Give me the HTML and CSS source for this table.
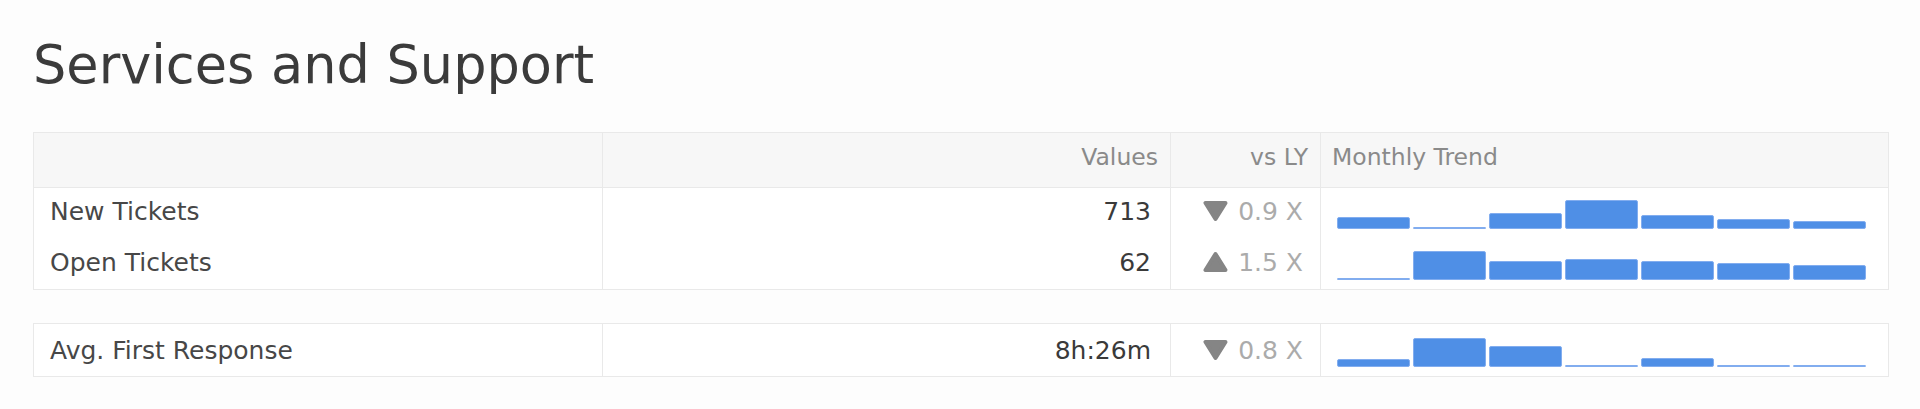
FILE: index.html
```html
<!DOCTYPE html>
<html lang="en">
<head>
<meta charset="utf-8">
<title>Services and Support</title>
<link rel="stylesheet" href="styles.css">
</head>
<body>
<main class="page">
  <h1 class="title">Services and Support</h1>

  <section class="kpi-table">
    <div class="row head">
      <div class="cell label"></div>
      <div class="cell value">Values</div>
      <div class="cell delta">vs LY</div>
      <div class="cell trend">Monthly Trend</div>
    </div>
    <div class="row body first">
      <div class="cell label">New Tickets</div>
      <div class="cell value">713</div>
      <div class="cell delta">
        <svg class="tri" viewBox="0 0 25 22" aria-hidden="true"><polygon points="2.5,3 22.5,3 12.5,19" /></svg>
        <span>0.9 X</span>
      </div>
      <div class="cell trend">
        <div class="spark">
          <span class="bar" style="height:12px"></span>
          <span class="bar" style="height:2px"></span>
          <span class="bar" style="height:16px"></span>
          <span class="bar" style="height:29px"></span>
          <span class="bar" style="height:14px"></span>
          <span class="bar" style="height:10px"></span>
          <span class="bar" style="height:8px"></span>
        </div>
      </div>
    </div>
    <div class="row body last">
      <div class="cell label">Open Tickets</div>
      <div class="cell value">62</div>
      <div class="cell delta">
        <svg class="tri" viewBox="0 0 25 22" aria-hidden="true"><polygon points="2.5,19 22.5,19 12.5,3" /></svg>
        <span>1.5 X</span>
      </div>
      <div class="cell trend">
        <div class="spark">
          <span class="bar" style="height:2px"></span>
          <span class="bar" style="height:29px"></span>
          <span class="bar" style="height:19px"></span>
          <span class="bar" style="height:21px"></span>
          <span class="bar" style="height:19px"></span>
          <span class="bar" style="height:17px"></span>
          <span class="bar" style="height:15px"></span>
        </div>
      </div>
    </div>
  </section>

  <section class="kpi-table second">
    <div class="row body single">
      <div class="cell label">Avg. First Response</div>
      <div class="cell value">8h:26m</div>
      <div class="cell delta">
        <svg class="tri" viewBox="0 0 25 22" aria-hidden="true"><polygon points="2.5,3 22.5,3 12.5,19" /></svg>
        <span>0.8 X</span>
      </div>
      <div class="cell trend">
        <div class="spark">
          <span class="bar" style="height:8px"></span>
          <span class="bar" style="height:29px"></span>
          <span class="bar" style="height:21px"></span>
          <span class="bar" style="height:2px"></span>
          <span class="bar" style="height:9px"></span>
          <span class="bar" style="height:2px"></span>
          <span class="bar" style="height:2px"></span>
        </div>
      </div>
    </div>
  </section>
</main>
</body>
</html>
```

FILE: styles.css
```css
* { box-sizing: border-box; }

html, body {
  margin: 0;
  padding: 0;
  background: #fdfdfd;
}

body {
  font-family: "DejaVu Sans", "Liberation Sans", sans-serif;
  color: #444444;
}

.page {
  padding: 34px 0 0 33px;
}

.title {
  margin: 0;
  font-size: 52.5px;
  line-height: 62px;
  font-weight: normal;
  color: #3b3b3b;
}

.kpi-table {
  width: 1856px;
  margin-top: 36px;
  border: 1px solid #e9e9e9;
  background: #ffffff;
}

.kpi-table.second {
  margin-top: 33px;
}

.row {
  display: grid;
  grid-template-columns: 569px 568px 150px 567px;
}

.cell {
  border-right: 1px solid #e9e9e9;
  display: flex;
  align-items: flex-start;
  white-space: nowrap;
}

.cell.trend {
  border-right: none;
}

/* header */
.head .cell {
  height: 55px;
  padding-top: 11px;
  border-bottom: 1px solid #e9e9e9;
  background: #f7f7f7;
  font-size: 23.5px;
  line-height: 27px;
  color: #8a8a8a;
}

.head .value,
.head .delta {
  justify-content: flex-end;
  padding-right: 12px;
}

.head .trend {
  padding-left: 11px;
}

/* body rows */
.body .cell {
  font-size: 25px;
  line-height: 29px;
  padding-top: 9px;
}

.body.first .cell { height: 51px; }
.body.last .cell { height: 50px; }
.body.single .cell {
  height: 52px;
  padding-top: 12px;
}

.body .label {
  padding-left: 16px;
  color: #474747;
}

.body .value {
  justify-content: flex-end;
  padding-right: 19px;
  color: #3a3a3a;
}

.body .delta {
  justify-content: flex-end;
  gap: 10px;
  padding-right: 17px;
  color: #ababab;
}

.tri {
  width: 25px;
  height: 22px;
  margin-top: 3px;
  flex: none;
}

.tri polygon {
  fill: #858585;
  stroke: #858585;
  stroke-width: 4;
  stroke-linejoin: round;
}

.body .trend {
  padding-top: 12px;
  padding-left: 16px;
}

.body.single .trend {
  padding-top: 14px;
}

.spark {
  display: flex;
  align-items: flex-end;
  gap: 3px;
  width: 529px;
  height: 29px;
}

.bar {
  flex: 1;
  background: #4f8fe6;
  border: 1px solid #82adef;
  border-radius: 2px;
}
```
